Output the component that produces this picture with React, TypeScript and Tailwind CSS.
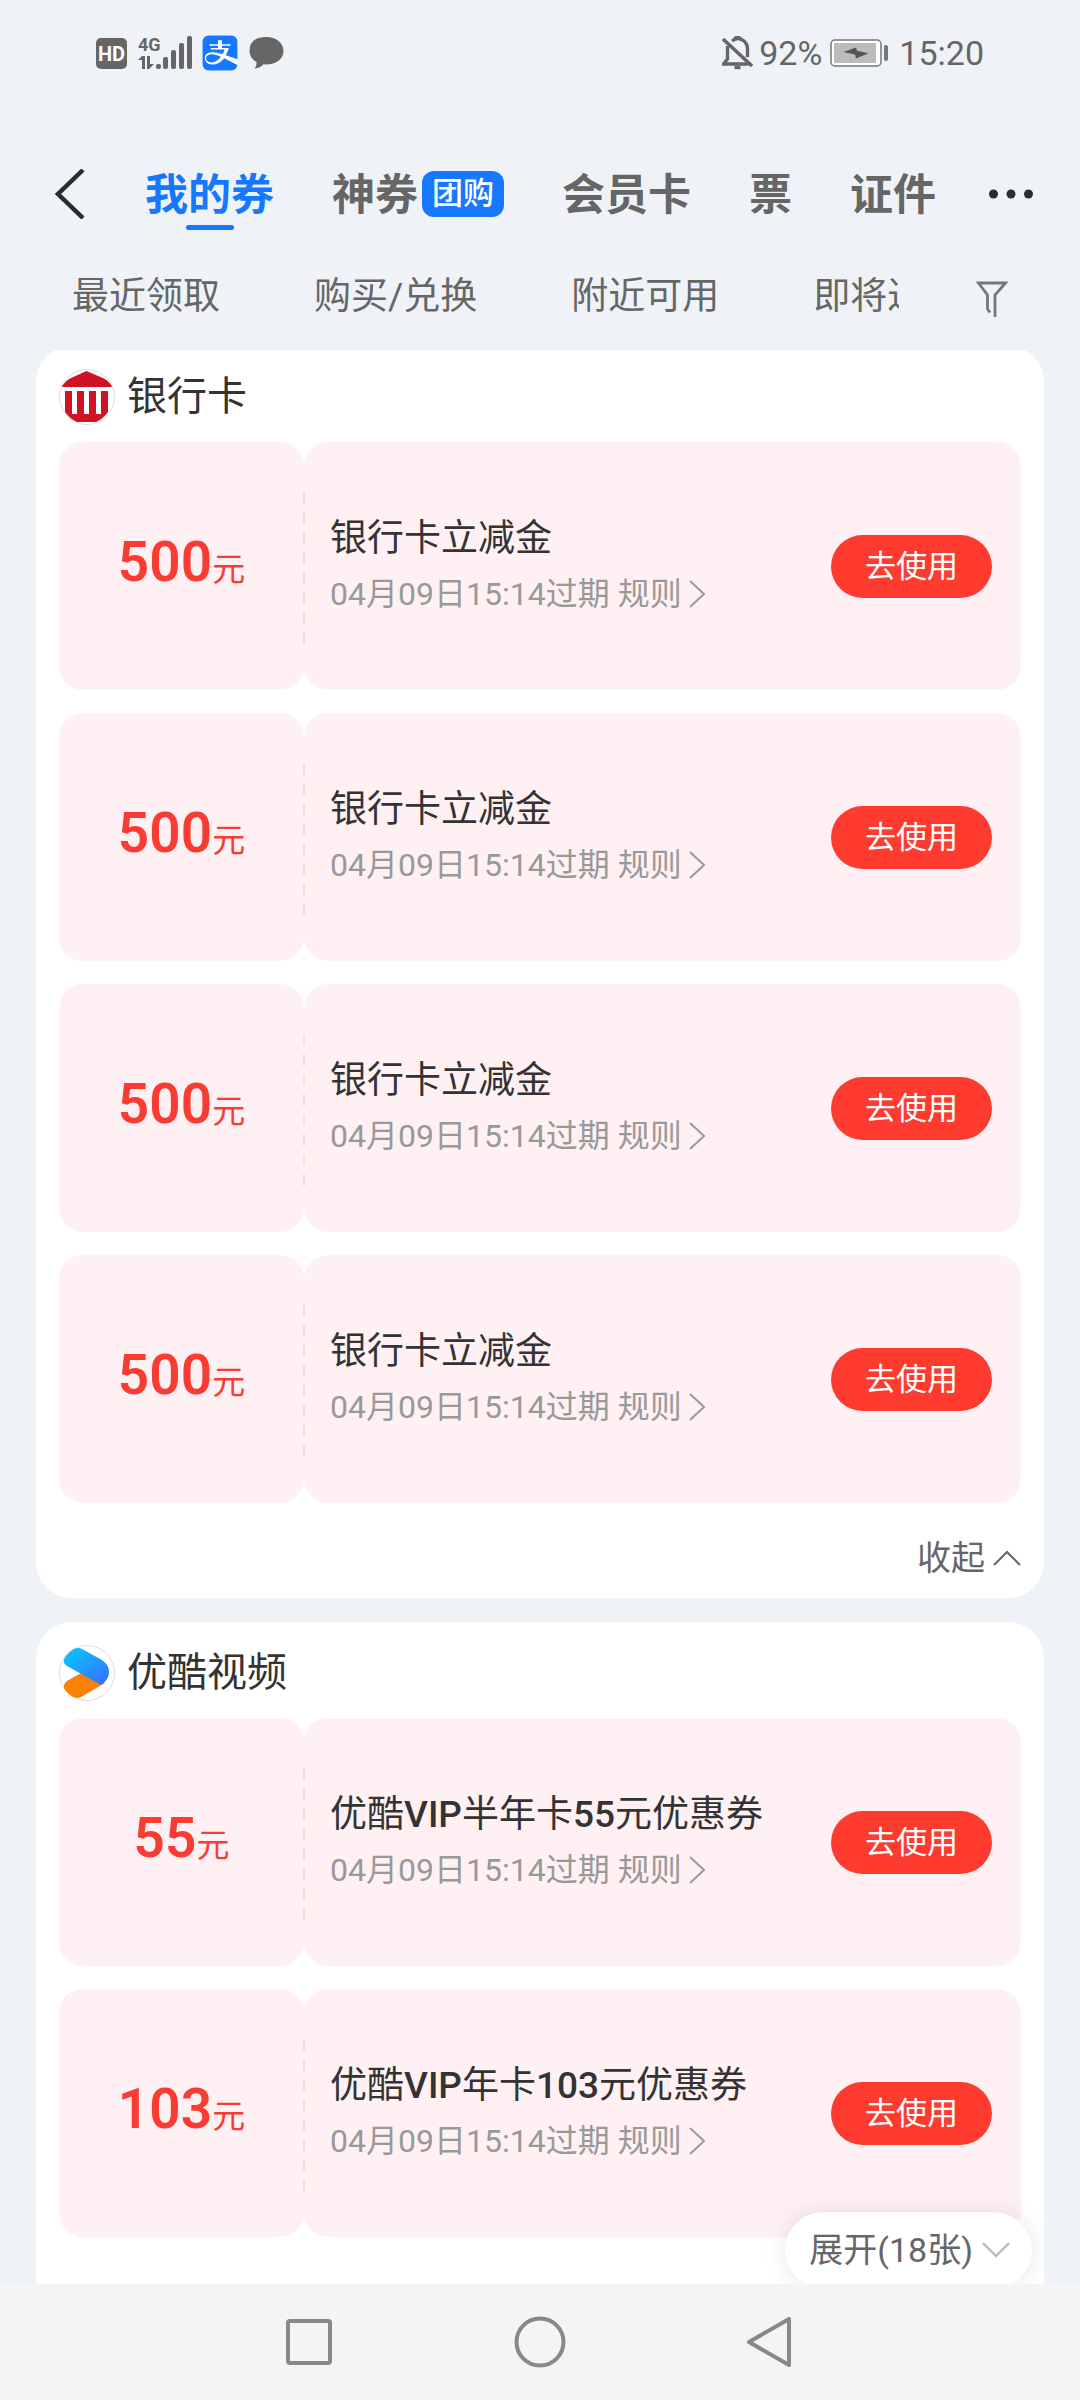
import { useState } from "react";
import { FaAlipay } from "react-icons/fa";

type Coupon = { amount: string; title: string };

const bankCoupons: Coupon[] = [
  { amount: "500", title: "银行卡立减金" },
  { amount: "500", title: "银行卡立减金" },
  { amount: "500", title: "银行卡立减金" },
  { amount: "500", title: "银行卡立减金" },
];

const youkuCoupons: Coupon[] = [
  { amount: "55", title: "优酷VIP半年卡55元优惠券" },
  { amount: "103", title: "优酷VIP年卡103元优惠券" },
];

const tabs = ["我的券", "神券", "会员卡", "票", "证件"];
const filters = ["最近领取", "购买/兑换", "附近可用", "即将过期"];

export default function App() {
  const [activeTab, setActiveTab] = useState("我的券");

  return (
    <div className="flex h-screen flex-col overflow-hidden bg-[#eff3f8] font-['Roboto','Noto_Sans_CJK_SC',sans-serif] text-[#333333]">
      <StatusBar />

      <header className="shrink-0">
        <div className="flex h-[92px] items-center pl-[54px] pr-[46px]">
          <button aria-label="返回" className="mr-[60px] shrink-0">
            <svg width="31" height="50" viewBox="0 0 31 50" fill="none" stroke="#2b2b30" strokeWidth="4.5">
              <path d="M29 1 4 25l25 24" />
            </svg>
          </button>
          <nav className="flex flex-1 items-center gap-[58px]">
            {tabs.map((tab) => (
              <button
                key={tab}
                onClick={() => setActiveTab(tab)}
                className={`relative flex shrink-0 items-center text-[43px] leading-[60px] font-bold ${tab === activeTab ? "text-[#1677ff]" : "text-[#666666]"}`}
              >
                <span className="pt-0.5">{tab}</span>
                {tab === "神券" && (
                  <span className="ml-1 rounded-xl bg-[#1677ff] px-2.5 text-[31px] leading-[46px] font-medium text-white">团购</span>
                )}
                {tab === activeTab && (
                  <span className="absolute -bottom-[5px] left-1/2 h-[5px] w-12 -translate-x-1/2 rounded-sm bg-[#1677ff]" />
                )}
              </button>
            ))}
          </nav>
          <button aria-label="更多" className="shrink-0">
            <svg width="45" height="10" viewBox="0 0 45 10" fill="#2b2b30">
              <circle cx="4.5" cy="5" r="4.5" />
              <circle cx="22" cy="5" r="4.5" />
              <circle cx="39.5" cy="5" r="4.5" />
            </svg>
          </button>
        </div>

        <div className="flex h-[110px] items-center px-[72px] pt-1">
          <div className="flex flex-1 gap-[94px] overflow-hidden">
            {filters.map((f) => (
              <button key={f} className="shrink-0 text-[37px] leading-[54px] text-[#666666]">
                {f}
              </button>
            ))}
          </div>
          <button aria-label="筛选" className="ml-[77px] shrink-0 pt-1">
            <svg width="32" height="38" viewBox="0 0 32 38" fill="none" stroke="#777777" strokeWidth="2.8">
              <path d="M14 32.5 11.5 29V15L2.5 3h27L19 15v22" />
            </svg>
          </button>
        </div>
      </header>

      <main className="relative min-h-0 flex-1 overflow-hidden px-9">
        <div className="-mt-1 flex flex-col gap-6">
          <CouponSection title="银行卡" logo={<BankLogo />} coupons={bankCoupons}>
            <div className="flex h-[95px] items-center justify-end">
              <button className="flex items-center gap-2 pt-3.5 text-[34px] leading-[50px] text-[#666666]">
                收起
                <svg width="28" height="16" viewBox="0 0 28 16" fill="none" stroke="#666666" strokeWidth="2">
                  <path d="M1 15 14 2l13 13" />
                </svg>
              </button>
            </div>
          </CouponSection>
          <CouponSection title="优酷视频" logo={<YoukuLogo />} coupons={youkuCoupons}>
            <div className="h-[95px]" />
          </CouponSection>
        </div>
        <button className="absolute right-12 -bottom-1 flex h-[76px] items-center gap-2 rounded-full bg-white pr-[21px] pl-6 text-[34px] leading-[50px] text-[#666666] shadow-[0_0_24px_rgba(0,0,0,0.1)]">
          展开(18张)
          <svg width="30" height="16" viewBox="0 0 30 16" fill="none" stroke="#bbbbbb" strokeWidth="2.4">
            <path d="M2 1l13 13L28 1" />
          </svg>
        </button>
      </main>

      <SystemNav />
    </div>
  );
}

function CouponSection({ title, logo, coupons, children }: { title: string; logo: React.ReactNode; coupons: Coupon[]; children?: React.ReactNode }) {
  return (
    <section className="rounded-[36px] bg-white px-[23px]">
      <div className="flex h-24 items-center gap-3 pt-1.5">
        {logo}
        <h2 className="text-[40px] leading-[56px]">{title}</h2>
      </div>
      <div className="flex flex-col gap-[23px]">
        {coupons.map((c, i) => (
          <CouponCard key={i} coupon={c} />
        ))}
      </div>
      {children}
    </section>
  );
}

function CouponCard({ coupon }: { coupon: Coupon }) {
  // latin runs are heavier than the Chinese text around them
  const parts = coupon.title.split(/([A-Z0-9]+)/).filter(Boolean);

  return (
    <div className="flex min-h-[248px]">
      <div className="flex w-[245px] shrink-0 items-baseline justify-center rounded-3xl bg-[#fff1f3] pt-[87px] text-[#f93c33]">
        <span className="text-[55px] leading-[66px] font-semibold">{coupon.amount}</span>
        <span className="text-[33px]">元</span>
      </div>
      <div className="relative flex flex-1 items-center justify-between rounded-3xl bg-[#fff1f3] pr-[29px] pl-[26px]">
        <span className="absolute top-[50px] bottom-[44px] -left-px w-[2px] bg-[repeating-linear-gradient(to_bottom,#fbd9dd_0,#fbd9dd_12px,transparent_12px,transparent_20px)]" />
        <div>
          <h3 className="pt-0.5 text-[37px] leading-[54px]">
            {parts.map((p, i) => (
              <span key={i} className={/[A-Z0-9]/.test(p) ? "font-medium" : "font-normal"}>
                {p}
              </span>
            ))}
          </h3>
          <div className="flex items-center text-[32px] leading-[56px] text-[#999999]">
            <span>04月09日15:14过期</span>
            <a href="#rules" className="ml-2 flex items-center gap-1.5">
              规则
              <svg width="18" height="28" viewBox="0 0 18 28" fill="none" stroke="#999999" strokeWidth="2">
                <path d="M2 1l14 13L2 27" />
              </svg>
            </a>
          </div>
        </div>
        <button className="rounded-full bg-[#ff3b30] px-[34px] text-[31px] leading-[63px] text-white">去使用</button>
      </div>
    </div>
  );
}

function BankLogo() {
  return (
    <svg width="56" height="56" viewBox="0 0 56 56">
      <circle cx="28" cy="28" r="27.5" fill="#fff" stroke="#e2dada" />
      <path d="M27.5 2 45 9.5Q51 13 53 18H3q2-5 8-8.500z" fill="#cf1322" />
      <path d="M6 22h7v23h5V22h7v23h5V22h7v23h5V22h7v21q-5 7-12 10H18Q11 50 6 43z" fill="#cf1322" />
    </svg>
  );
}

function YoukuLogo() {
  return (
    <svg width="56" height="56" viewBox="0 0 56 56">
      <defs>
        <linearGradient id="yk-blue" x1="0" y1="0" x2="1" y2="1">
          <stop offset="0.2" stopColor="#0fb8ff" />
          <stop offset="1" stopColor="#3b6cff" />
        </linearGradient>
      </defs>
      <circle cx="28" cy="28" r="27.5" fill="#fff" stroke="#dddddd" />
      <path d="M24 27 8 36q-5 4-2 9 6 7 12 8 2 0 4-1l24-14z" fill="#fb8005" />
      <path d="M15 4q4-2 8 0l20 11q7 5 7 12 0 8-8 13L8 21q-6-4-1-10 4-5 8-7z" fill="url(#yk-blue)" />
    </svg>
  );
}

function StatusBar() {
  return (
    <div className="mb-[42px] flex h-[106px] shrink-0 items-center justify-between pr-[96px] pl-24 text-[#666666]">
      <div className="flex items-center">
        <svg width="31" height="31" viewBox="0 0 31 31">
          <rect width="31" height="31" rx="5" fill="#666666" />
          <text x="15.5" y="23" textAnchor="middle" fill="#fff" fontSize="20" fontWeight="700" fontFamily="Roboto, sans-serif">HD</text>
        </svg>
        <svg width="54" height="36" viewBox="0 0 54 36" className="ml-[11px]" fill="#666666">
          <text x="0" y="16" fontSize="18" fontWeight="700" fontFamily="Roboto, sans-serif">4G</text>
          <path d="M0 25l4-4h3v13H4v-9zM9 21h3v8h4l-5 5H9z" />
          <rect x="18" y="29" width="5" height="5" rx="2" />
          <rect x="25" y="22" width="5" height="12" rx="2" />
          <rect x="33" y="15" width="5" height="19" rx="2" />
          <rect x="41" y="8" width="5" height="26" rx="2" />
          <rect x="49" y="1" width="5" height="33" rx="2" />
        </svg>
        <span className="ml-[10px] flex size-9 items-center justify-center overflow-hidden rounded-lg bg-white">
          <FaAlipay className="size-10 shrink-0 text-[#1677ff]" />
        </span>
        <svg width="35" height="32" viewBox="0 0 35 32" className="ml-[11px]" fill="#666666">
          <path d="M17.5 0C27 0 34.5 6 34.5 14S27 27.5 17.5 27.5q-1.5 0-3-.2Q11 31 5.500 31.500 8 29 7.500 25 .5 21 .5 14 .5 0 17.5 0z" />
        </svg>
      </div>
      <div className="flex items-center text-[34px] leading-[48px]">
        <svg width="31" height="34" viewBox="0 0 31 34" fill="none" stroke="#666666" strokeWidth="3.4">
          <path d="M5.5 10v13L1.5 28h25M10 5q6-5 12 0 3.500 3 3.500 8v8" />
          <path d="M12 5q0-4 3.5-4T19 5" strokeWidth="2.5" />
          <path d="M1 3l29 27" />
          <path d="M12.5 31.500h6" />
        </svg>
        <span className="ml-1.5">92%</span>
        <svg width="58" height="28" viewBox="0 0 58 28" className="ml-2">
          <rect x="1" y="1" width="50" height="26" rx="4" fill="#fff" stroke="#777777" strokeWidth="1.5" />
          <rect x="4" y="4" width="42" height="20" rx="1" fill="#bcbcbc" />
          <path d="M13.5 13 26 8.500l1 3.300 11.500 2.500L26 19.500l-1-4z" fill="#555555" />
          <rect x="54" y="6" width="4" height="16" rx="2" fill="#777777" />
        </svg>
        <span className="ml-[11px]">15:20</span>
      </div>
    </div>
  );
}

function SystemNav() {
  return (
    <footer className="flex h-[116px] shrink-0 items-center justify-center gap-[179px] bg-[#f4f4f4]">
      <button aria-label="最近任务">
        <svg width="52" height="52" viewBox="0 0 52 52" fill="none" stroke="#888888" strokeWidth="4">
          <rect x="5" y="5" width="42" height="42" rx="2" />
        </svg>
      </button>
      <button aria-label="主屏幕">
        <svg width="52" height="52" viewBox="0 0 52 52" fill="none" stroke="#888888" strokeWidth="4">
          <circle cx="26" cy="26" r="23.5" />
        </svg>
      </button>
      <button aria-label="返回上一级">
        <svg width="52" height="52" viewBox="0 0 52 52" fill="none" stroke="#888888" strokeWidth="4" strokeLinejoin="round">
          <path d="M44 3v46L4 26z" />
        </svg>
      </button>
    </footer>
  );
}
